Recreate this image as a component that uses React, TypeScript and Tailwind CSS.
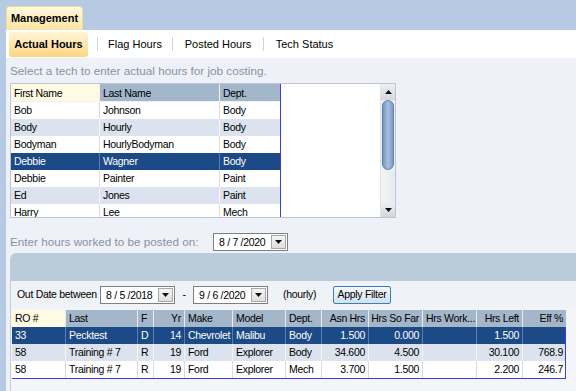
import React from "react";

const NARROW = "font-['Liberation_Sans',Arial,sans-serif] tracking-[-0.3px]";

function DownTri() {
  return (
    <svg width="7" height="4" viewBox="0 0 7 4">
      <path d="M0 0h7L3.5 4z" fill="#111" />
    </svg>
  );
}
function UpTri() {
  return (
    <svg width="7" height="4" viewBox="0 0 7 4">
      <path d="M0 4h7L3.5 0z" fill="#111" />
    </svg>
  );
}

function DateBox({ value }: { value: string }) {
  return (
    <div className="flex shrink-0 h-[18px] w-[75px] border border-[#7d7f82] bg-white">
      <div className={`flex-1 pl-[5px] text-[10.5px] leading-[16px] whitespace-nowrap ${NARROW}`}>{value}</div>
      <div className="my-[1px] mr-[1px] w-[15px] flex items-center justify-center bg-gradient-to-b from-[#f4f4f4] to-[#dedede] border border-[#a8a8a8]">
        <DownTri />
      </div>
    </div>
  );
}

type RowKind = "white" | "alt" | "sel";

const rowBg: Record<RowKind, string> = {
  white: "bg-white text-black",
  alt: "bg-[#dce3ee] text-black",
  sel: "bg-[#1b4a86] text-white",
};
const rowSep: Record<RowKind, string> = {
  white: "border-[#d6dce6]",
  alt: "border-[#f4f6fa]",
  sel: "border-[#5b7eae]",
};

const topCols = [89, 120, 60];
const topRows: [string, string, string, RowKind][] = [
  ["Bob", "Johnson", "Body", "white"],
  ["Body", "Hourly", "Body", "alt"],
  ["Bodyman", "HourlyBodyman", "Body", "white"],
  ["Debbie", "Wagner", "Body", "sel"],
  ["Debbie", "Painter", "Paint", "white"],
  ["Ed", "Jones", "Paint", "alt"],
  ["Harry", "Lee", "Mech", "white"],
];

function TopGrid() {
  return (
    <div className="mt-[5px] w-[386px] h-[135px] border border-[#bcc5d1] bg-white flex overflow-hidden">
      <div className="flex-1 bg-white">
        <div className={`w-[270px] h-full border-r border-[#3a3aff] ${NARROW} text-[10.5px]`}>
          <div className="flex h-[18px]">
            {["First Name", "Last Name", "Dept."].map((h, i) => (
              <div
                key={h}
                style={{ width: topCols[i] }}
                className={`shrink-0 h-full leading-[18px] pl-[3px] border-r border-b border-[#eef1f5] ${
                  i === 0 ? "bg-[#fffbe2]" : "bg-[#a4b6ca]"
                } ${i === 2 ? "border-r-0" : ""}`}
              >
                {h}
              </div>
            ))}
          </div>
          {topRows.map((r, ri) => (
            <div key={ri} className={`flex h-[17px] ${rowBg[r[3]]}`}>
              {[r[0], r[1], r[2]].map((c, i) => (
                <div
                  key={i}
                  style={{ width: topCols[i] }}
                  className={`shrink-0 h-full leading-[17px] pl-[3px] ${i < 2 ? "border-r" : ""} ${rowSep[r[3]]}`}
                >
                  {c}
                </div>
              ))}
            </div>
          ))}
        </div>
      </div>
      <div className="w-[15px] flex flex-col bg-[#eef0f3] border-l border-[#dfe2e7]">
        <div className="h-[16px] flex items-center justify-center bg-gradient-to-b from-[#eef0f3] to-[#d3d7de]">
          <UpTri />
        </div>
        <div className="h-[70px] mx-[1px] rounded-[6px] border border-[#6182ae] bg-gradient-to-r from-[#7395c3] via-[#a9c1de] to-[#7a9bc6]" />
        <div className="flex-1 bg-gradient-to-r from-[#f3f4f7] to-[#e6e9ee]" />
        <div className="h-[15px] flex items-center justify-center bg-gradient-to-b from-[#eef0f3] to-[#d3d7de]">
          <DownTri />
        </div>
      </div>
    </div>
  );
}

type BCol = { w: number; label: string; right?: boolean };
const bCols: BCol[] = [
  { w: 54, label: "RO #" },
  { w: 72, label: "Last" },
  { w: 16, label: "F" },
  { w: 31, label: "Yr", right: true },
  { w: 48, label: "Make" },
  { w: 53, label: "Model" },
  { w: 36, label: "Dept." },
  { w: 47, label: "Asn Hrs", right: true },
  { w: 54, label: "Hrs So Far", right: true },
  { w: 54, label: "Hrs Work..." },
  { w: 46, label: "Hrs Left", right: true },
  { w: 43, label: "Eff %", right: true },
];
const bRows: [string[], RowKind][] = [
  [["33", "Pecktest", "D", "14", "Chevrolet", "Malibu", "Body", "1.500", "0.000", "", "1.500", ""], "sel"],
  [["58", "Training # 7", "R", "19", "Ford", "Explorer", "Body", "34.600", "4.500", "", "30.100", "768.9"], "alt"],
  [["58", "Training # 7", "R", "19", "Ford", "Explorer", "Mech", "3.700", "1.500", "", "2.200", "246.7"], "white"],
];

function BottomGrid() {
  return (
    <div className={`mt-[2px] ml-[1px] w-[554px] border-r border-b border-[#3a3aff] ${NARROW} text-[10.5px]`}>
      <div className="flex h-[17px]">
        {bCols.map((c, i) => (
          <div
            key={c.label}
            style={{ width: c.w }}
            className={`shrink-0 h-full leading-[17px] overflow-hidden whitespace-nowrap border-r border-[#e6ebf1] ${
              c.right ? "text-right pr-[3px]" : "pl-[3px]"
            } ${i === 0 ? "bg-[#fffbe2]" : "bg-[#a4b6ca]"} ${i === bCols.length - 1 ? "border-r-0" : ""}`}
          >
            {c.label}
          </div>
        ))}
      </div>
      {bRows.map(([cells, kind], ri) => (
        <div key={ri} className={`flex h-[17px] ${rowBg[kind]}`}>
          {cells.map((v, i) => (
            <div
              key={i}
              style={{ width: bCols[i].w }}
              className={`shrink-0 h-full leading-[17px] overflow-hidden whitespace-nowrap ${
                i < cells.length - 1 ? "border-r" : ""
              } ${rowSep[kind]} ${bCols[i].right ? "text-right pr-[3px]" : "pl-[3px]"}`}
            >
              {v}
            </div>
          ))}
        </div>
      ))}
    </div>
  );
}

export default function App() {
  return (
    <div className="w-[576px] h-[391px] overflow-hidden bg-[#b6cae3] flex flex-col font-['Liberation_Sans',Arial,sans-serif] text-black">
      <div className="h-[30px] shrink-0 flex items-end pl-[6px]">
        <div className="h-[24px] w-[77px] rounded-t-[4px] border border-b-0 border-[#efd99c] bg-gradient-to-b from-[#fff8e0] to-[#fde5a0] flex items-center justify-center text-[11px] font-bold">
          Management
        </div>
      </div>
      <div className="flex-1 min-h-0 ml-[6px] bg-[#eef1f7] flex flex-col">
        <div className="h-[28px] shrink-0 bg-white flex items-center pl-[3px] text-[11px]">
          <div className="mt-[1px] h-[25px] w-[79px] rounded-[3px] bg-gradient-to-b from-[#fff6d6] to-[#fdd67e] flex items-center justify-center font-bold">
            Actual Hours
          </div>
          <div className="ml-[9px] w-px h-[14px] bg-[#cfd4db]" />
          <div className="w-[74px] text-center">Flag Hours</div>
          <div className="w-px h-[14px] bg-[#cfd4db]" />
          <div className="w-[90px] text-center">Posted Hours</div>
          <div className="w-px h-[14px] bg-[#cfd4db]" />
          <div className="w-[81px] text-center">Tech Status</div>
        </div>
        <div className="pl-[4px] flex flex-col">
          <div className="pt-[6px] text-[11.7px] leading-[14px] text-[#8893a4] whitespace-nowrap">
            Select a tech to enter actual hours for job costing.
          </div>
          <TopGrid />
          <div className="mt-[15px] h-[18px] flex items-center">
            <div className="w-[203px] text-[11.7px] text-[#8893a4] whitespace-nowrap">Enter hours worked to be posted on:</div>
            <DateBox value="8 / 7 /2020" />
          </div>
        </div>
        <div className="flex-1 min-h-0 ml-[4px] mt-[2px] rounded-tl-[6px] border-l border-[#c3ccd8] bg-[#f3f5f9] flex flex-col overflow-hidden">
          <div className="h-[28px] shrink-0 bg-[#bacbda]" />
          <div className={`h-[27px] shrink-0 bg-[#eff2f7] flex items-center text-[10.5px] whitespace-nowrap ${NARROW}`}>
            <div className="w-[89px] shrink-0 pl-[6px]">Out Date between</div>
            <DateBox value="8 / 5 /2018" />
            <div className="w-[18px] shrink-0 text-center">-</div>
            <DateBox value="9 / 6 /2020" />
            <div className="w-[65px] shrink-0 pl-[15px]">(hourly)</div>
            <div className="h-[18px] w-[58px] shrink-0 rounded-[2px] border border-[#3c7fb1] bg-gradient-to-b from-[#f5f8fc] to-[#d3e1ef] flex items-center justify-center">
              Apply Filter
            </div>
          </div>
          <BottomGrid />
        </div>
      </div>
    </div>
  );
}
